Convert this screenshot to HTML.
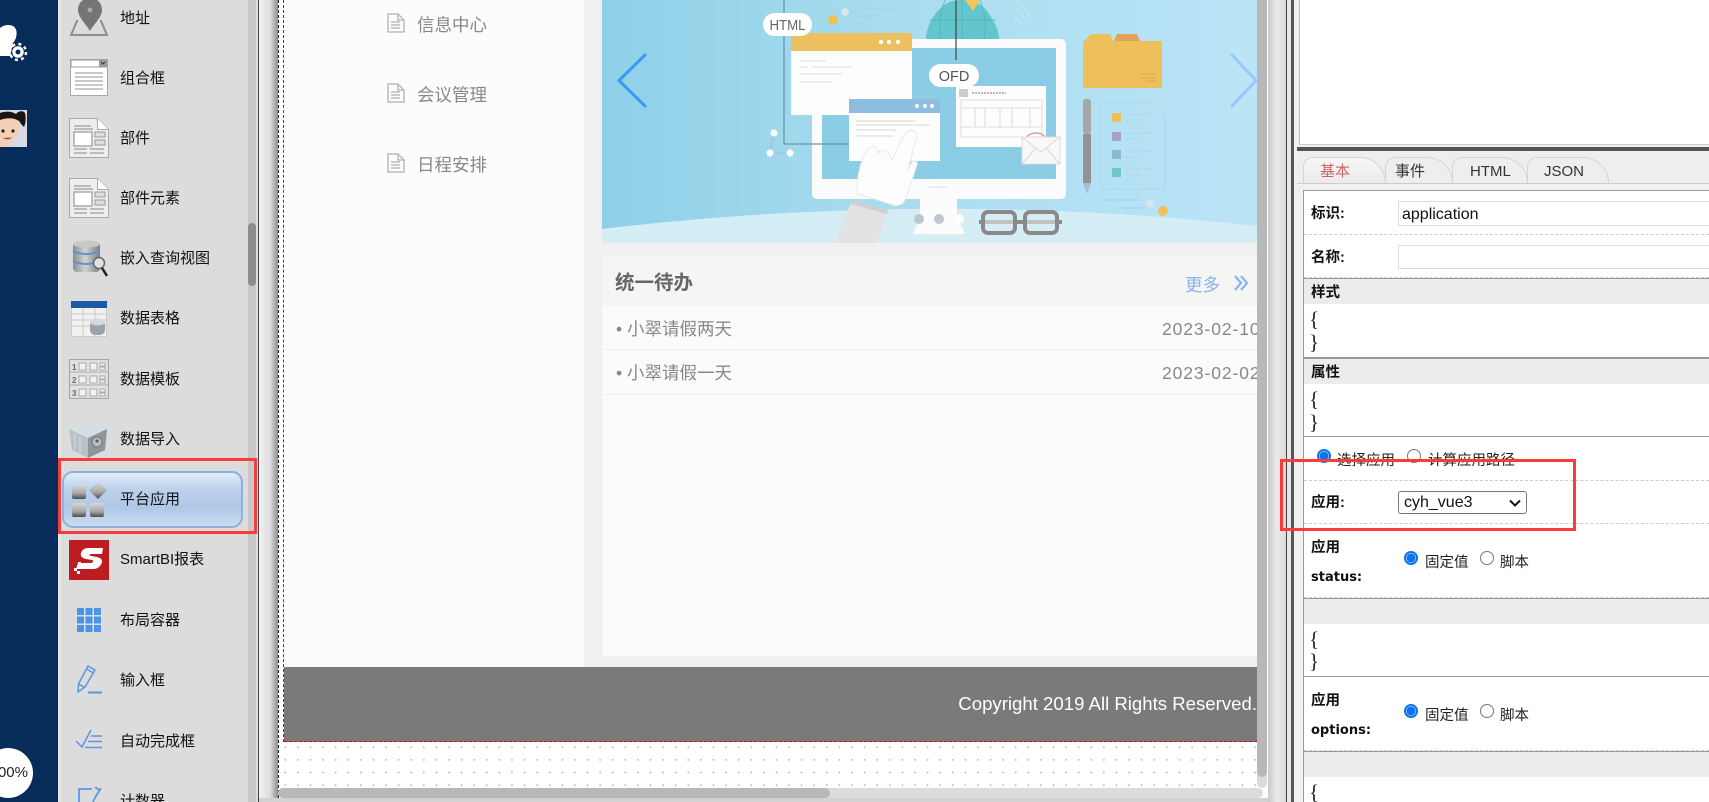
<!DOCTYPE html>
<html lang="zh"><head><meta charset="utf-8"><title>设计器</title>
<style>
html,body{margin:0;padding:0;width:1709px;height:802px;overflow:hidden;background:#eee}
body{position:relative;font-family:"Liberation Sans","Noto Sans CJK SC",sans-serif;color:#111}
.a,.t,.l,.h,.b,.r{position:absolute}
.t{white-space:nowrap;line-height:20px}
.n{left:120px;font-size:15px;color:#111;margin-top:1px}
.m{left:417px;font-size:17.5px;color:#888;margin-top:1px}
.l{left:1311px;font-size:14.5px;font-weight:bold;white-space:nowrap;line-height:20px;color:#111;margin-top:1px}
.h{left:1304px;width:405px;height:25px;background:#ececec}
.b{left:1309px;font-size:21px;line-height:20px;font-family:"Liberation Serif","Noto Sans CJK SC",serif;color:#222;margin-top:-1px}
.line{position:absolute;left:1304px;width:405px;height:0;border-top:1px solid #999}
.dash{position:absolute;left:1304px;width:405px;height:0;border-top:1px dashed #ccc}
.r{width:14px;height:14px;box-sizing:border-box;border-radius:50%;border:1.5px solid #777;background:#fff}
.r.on{border:2px solid #0b74ea;background:radial-gradient(circle,#0b74ea 0,#0b74ea 4.2px,#fff 4.8px)}
.f{font-size:14.5px;color:#222;margin-top:1px}
.tab{position:absolute;top:157px;height:26px;box-sizing:border-box;border:1px solid #d4d4d4;border-bottom:0;border-radius:10px 26px 0 0;background:#eee;font-size:15px;line-height:28px;color:#333}
svg{position:absolute;display:block}
</style></head><body>

<!-- Left navy bar -->
<div class="a" style="left:0;top:0;width:58px;height:802px;background:#082c59"></div>
<svg style="left:0;top:24px" width="30" height="38" viewBox="0 0 30 38"><path d="M0 4C3 1 9 0 13 2c3 2 4 5 3.500 9-.5 4-2 6-3.500 8-1 2 0 3 2 4l-4 9H0z" fill="#fff"/><circle cx="18" cy="28" r="6.500" fill="#fff" stroke="#082c59" stroke-width="1.500"/><circle cx="18" cy="28" r="8" fill="none" stroke="#fff" stroke-width="2.500" stroke-dasharray="3 3.300"/><circle cx="18" cy="28" r="2.500" fill="#082c59"/></svg>
<svg style="left:0;top:110px" width="27" height="37" viewBox="0 0 27 37"><rect width="27" height="37" fill="#d8dbe6"/><path d="M0 9c6-3 13-3 17 0 3 4 3 11 0 17-3 4-5 5-7 6l1 5H0z" fill="#f2cfb6"/><path d="M0 3c5-2 12-2 16 1 2 2 3 5 3 7-6-4-13-3-19-1z" fill="#1c1410"/><path d="M16 4c2-3 7-4 9-1 1 4 1 10-1 14l-3-3c-2-3-4-7-5-10z" fill="#1c1410"/><circle cx="3" cy="21" r="1.600" fill="#222"/><circle cx="13" cy="21" r="1.600" fill="#222"/><path d="M3 28q5 3 9-.5z" fill="#b04040"/></svg>
<div class="a" style="left:-17px;top:748px;width:50px;height:50px;border-radius:50%;background:#fff"></div>
<div class="t" style="left:-9px;top:763px;width:37px;text-align:right;font-size:15px;color:#222;overflow:hidden;direction:rtl"><span dir="ltr">100%</span></div>

<!-- Component panel -->
<div class="a" style="left:58px;top:0;width:200px;height:802px;background:#dcdcdc"></div>
<div class="a" style="left:58px;top:0;width:3px;height:802px;background:#e6e6e6"></div>
<div class="a" style="left:248px;top:0;width:8px;height:802px;background:#c8c8c8"></div>
<div class="a" style="left:248px;top:223px;width:8px;height:63px;border-radius:4px;background:#8c8c8c"></div>
<div class="a" style="left:258px;top:0;width:1px;height:802px;background:#444"></div>

<div class="t n" style="top:8px">地址</div>
<div class="t n" style="top:68px">组合框</div>
<div class="t n" style="top:128px">部件</div>
<div class="t n" style="top:188px">部件元素</div>
<div class="t n" style="top:248px">嵌入查询视图</div>
<div class="t n" style="top:308px">数据表格</div>
<div class="t n" style="top:369px">数据模板</div>
<div class="t n" style="top:429px">数据导入</div>
<div class="a" style="left:62px;top:471px;width:181px;height:57px;box-sizing:border-box;border:2px solid #8fb0d9;border-radius:11px;background:linear-gradient(#e1ecfa 0,#bcd2ec 30%,#aec8e6 65%,#cadcf2 100%)"></div>
<div class="t n" style="top:489px">平台应用</div>
<div class="t n" style="top:549px">SmartBI报表</div>
<div class="t n" style="top:610px">布局容器</div>
<div class="t n" style="top:670px">输入框</div>
<div class="t n" style="top:731px">自动完成框</div>
<div class="t n" style="top:791px">计数器</div>

<!-- icons -->
<svg style="left:69px;top:0" width="40" height="38" viewBox="0 0 40 38"><path d="M21 -2c-7 0-12 5-12 12 0 7 8 14 12 21 4-7 12-14 12-21 0-7-5-12-12-12z" fill="#757575"/><circle cx="21" cy="10" r="2.500" fill="#a8a8a8"/><path d="M9 21h-1L2 35h36l-6-14h-1" fill="none" stroke="#8e8e8e" stroke-width="2"/></svg>
<svg style="left:70px;top:59px" width="38" height="37" viewBox="0 0 38 37"><rect x=".5" y=".5" width="37" height="36" fill="#fff" stroke="#aaa"/><rect x="1" y="1" width="36" height="7" fill="#fff" stroke="#999"/><rect x="29" y="1" width="8" height="7" fill="#999"/><path d="M31 3l2 2 2-2" stroke="#333" fill="none"/><path d="M5 14h28M5 18h28M5 22h28M5 26h28M5 30h28" stroke="#aaa" stroke-width="1.200"/></svg>
<svg style="left:69px;top:118px" width="40" height="40" viewBox="0 0 40 40"><path d="M.5.5h28l11 11v28H.5z" fill="#eee" stroke="#aaa"/><path d="M28.500.5v11h11" fill="#fff" stroke="#aaa"/><path d="M5 8h17M5 11h19" stroke="#aaa" stroke-width="1.500"/><rect x="5" y="14" width="18" height="14" fill="#fff" stroke="#aaa" stroke-width="1.500"/><rect x="26" y="14" width="10" height="5" fill="#ddd" stroke="#999"/><rect x="26" y="22" width="10" height="5" fill="#ddd" stroke="#999"/><path d="M5 31h13M21 31h14M5 35h13M21 35h14" stroke="#aaa" stroke-width="1.500"/></svg>
<svg style="left:69px;top:178px" width="40" height="40" viewBox="0 0 40 40"><path d="M.5.500h28l11 11v28H.5z" fill="#eee" stroke="#aaa"/><path d="M28.500.5v11h11" fill="#fff" stroke="#aaa"/><path d="M5 8h17M5 11h19" stroke="#aaa" stroke-width="1.500"/><rect x="5" y="14" width="18" height="14" fill="#fff" stroke="#aaa" stroke-width="1.500"/><rect x="26" y="14" width="10" height="5" fill="#ddd" stroke="#999"/><rect x="26" y="22" width="10" height="5" fill="#ddd" stroke="#999"/><path d="M5 31h13M21 31h14M5 35h13M21 35h14" stroke="#aaa" stroke-width="1.500"/></svg>
<svg style="left:72px;top:240px" width="36" height="38" viewBox="0 0 36 38"><defs><linearGradient id="db" x1="0" x2="1"><stop offset="0" stop-color="#8d8d8d"/><stop offset=".45" stop-color="#d2d2d2"/><stop offset="1" stop-color="#7e7e7e"/></linearGradient></defs><rect x="1" y="2" width="27" height="30" rx="4" fill="url(#db)"/><ellipse cx="14.500" cy="4" rx="13.500" ry="3.500" fill="#c8c8c8"/><path d="M1 11q13.500 6 27 0M1 21q13.500 6 27 0" stroke="#5f92cf" stroke-width="2" fill="none"/><circle cx="27" cy="23" r="5.500" fill="#dce2e8" stroke="#666" stroke-width="1.500"/><path d="M30 28l5 8" stroke="#222" stroke-width="2.500"/></svg>
<svg style="left:71px;top:301px" width="36" height="36" viewBox="0 0 36 36"><rect x=".5" y=".5" width="35" height="35" fill="#f1f1f1" stroke="#ccc"/><rect width="36" height="7" fill="#1b5aa5"/><path d="M0 13h36M0 19h36M0 25h36M12 7v29M24 7v29" stroke="#ccc"/><rect x="19" y="19" width="15" height="15" rx="5" fill="#9ca3a8"/><ellipse cx="26.500" cy="21" rx="7.500" ry="3.500" fill="#d4d8da"/></svg>
<svg style="left:69px;top:359px" width="40" height="40" viewBox="0 0 40 40"><rect x=".5" y=".5" width="39" height="39" fill="#e2e2e2" stroke="#a5a5a5" stroke-width="1.200"/><path d="M0 13h40M0 26h40" stroke="#aaa"/><g fill="#f2f2f2" stroke="#aaa"><rect x="10" y="4" width="7" height="7"/><rect x="10" y="17" width="7" height="7"/><rect x="10" y="30" width="7" height="7"/><rect x="21" y="4" width="7" height="7"/><rect x="21" y="17" width="7" height="7"/><rect x="21" y="30" width="7" height="7"/><rect x="31" y="4" width="5" height="3"/><rect x="31" y="8" width="5" height="3"/><rect x="31" y="17" width="5" height="3"/><rect x="31" y="21" width="5" height="3"/><rect x="31" y="30" width="5" height="3"/><rect x="31" y="34" width="5" height="3"/></g><g font-size="8" fill="#666" font-family="Liberation Sans" font-weight="bold"><text x="3" y="11">1</text><text x="3" y="24">2</text><text x="3" y="37">3</text></g></svg>
<svg style="left:69px;top:420px" width="39" height="38" viewBox="0 0 39 38"><path d="M0 9l19-9 19 9-19 9z" fill="#d4dee4"/><path d="M0 9l19 9v20L3 30z" fill="#b8c2c9"/><path d="M38 9L19 18v20l17-8z" fill="#8c969c"/><circle cx="28" cy="22" r="5" fill="#bbb" stroke="#777"/><circle cx="28" cy="21" r="1.500" fill="#555"/><path d="M6 14v15M11 16v17" stroke="#d5dde2"/></svg>
<svg style="left:72px;top:481px" width="36" height="37" viewBox="0 0 36 37"><defs><linearGradient id="sq" x1="0" y1="0" x2="0" y2="1"><stop offset="0" stop-color="#d8d8d8"/><stop offset=".6" stop-color="#a6a6a6"/><stop offset="1" stop-color="#4c4c4c"/></linearGradient></defs><rect x="0" y="4" width="14" height="14" rx="2" fill="url(#sq)"/><path d="M26 1l9 8.500-9 8.500-9-8.500z" fill="url(#sq)"/><rect x="0" y="22" width="14" height="14" rx="2" fill="url(#sq)"/><rect x="18" y="22" width="14" height="14" rx="2" fill="url(#sq)"/></svg>
<svg style="left:69px;top:540px" width="40" height="40" viewBox="0 0 40 40"><rect width="40" height="40" fill="#bd1c20"/><path d="M34 8H20c-5 0-7 2-8 5s1 5 5 6l6 1c2 .5 1 3-1 3H9l-2 6h17c5 0 8-3 9-7 .5-3-2-4-5-5l-6-1c-2-.5-2-2 0-2h11z" fill="#fff"/><path d="M9 22h3v3H9zM12 26h3v3h-3zM5 28h3v3H5zM8 31h3v3H8z" fill="#fff"/></svg>
<svg style="left:77px;top:608px" width="24" height="24" viewBox="0 0 24 24" fill="#4c94e8"><rect width="7" height="7"/><rect x="8.500" width="7" height="7"/><rect x="17" width="7" height="7"/><rect y="8.500" width="7" height="7"/><rect x="8.500" y="8.500" width="7" height="7"/><rect x="17" y="8.500" width="7" height="7"/><rect y="17" width="7" height="7"/><rect x="8.500" y="17" width="7" height="7"/><rect x="17" y="17" width="7" height="7"/></svg>
<svg style="left:77px;top:665px" width="26" height="29" viewBox="0 0 26 29" fill="none" stroke="#5b97e2" stroke-width="1.500"><path d="M11 1l7 4-10 17-7 5 .5-8z"/><path d="M9.500 4l7 4M1.500 19l6.500 3.500"/><path d="M11 27.500h14" stroke-width="2"/></svg>
<svg style="left:75px;top:729px" width="28" height="20" viewBox="0 0 28 20" fill="none" stroke="#5b97e2" stroke-width="1.500"><path d="M1 12l6 6L16 1M16 7h11M13 12.500h14M10 18.500h17"/></svg>
<svg style="left:78px;top:787px" width="24" height="15" viewBox="0 0 24 15" fill="none" stroke="#5b97e2" stroke-width="1.800"><path d="M14 2H1v13M15 15l3-6 5-8M17 0l4 3"/></svg>

<!-- Red highlight left -->
<div class="a" style="left:58px;top:458px;width:199px;height:76px;box-sizing:border-box;border:3px solid #f73c3c"></div>

<!-- Canvas area -->
<div class="a" style="left:259px;top:0;width:19px;height:802px;background:linear-gradient(90deg,#f2f2f2,#dcdcdc 60%,#8c8c8c)"></div>
<div class="a" style="left:259px;top:798px;width:1027px;height:4px;background:#d2d2d2"></div>
<div class="a" style="left:278px;top:0;width:990px;height:798px;background:#fff;box-sizing:border-box;border-left:1px dashed #222"></div>
<div class="a" style="left:1268px;top:0;width:18px;height:802px;background:linear-gradient(90deg,#c8c8c8,#ececec 50%,#d8d8d8)"></div>
<div class="a" style="left:1286px;top:0;width:1px;height:802px;background:#444"></div>
<div class="a" style="left:1287px;top:0;width:4px;height:802px;background:#e8e8e8"></div>
<div class="a" style="left:1291px;top:0;width:3px;height:802px;background:#555"></div>
<div class="a" style="left:1294px;top:0;width:3px;height:802px;background:#f0f0f0"></div>

<!-- Dotted grid -->
<div class="a" style="left:279px;top:743px;width:978px;height:45px;background-image:radial-gradient(circle,#b4b4b4 .7px,transparent 1px);background-size:12.600px 12.600px;background-position:0 -2px"></div>

<!-- Page -->
<div class="a" style="left:284px;top:0;width:300px;height:667px;background:#fcfcfc"></div>
<div class="a" style="left:283px;top:0;width:0;height:742px;border-left:1px dashed #e00000"></div>
<div class="a" style="left:584px;top:0;width:673px;height:667px;background:#f0f0f0"></div>
<div class="a" style="left:602px;top:256px;width:655px;height:400px;background:#fbfbfb"></div>

<svg style="left:387px;top:13px" width="18" height="20" viewBox="0 0 18 20" fill="none" stroke="#bbb" stroke-width="1.500"><path d="M1 1h10l6 6v12H1zM11 1v6h6M4 9h9M4 12h9M4 15h9"/></svg>
<svg style="left:387px;top:83px" width="18" height="20" viewBox="0 0 18 20" fill="none" stroke="#bbb" stroke-width="1.500"><path d="M1 1h10l6 6v12H1zM11 1v6h6M4 9h9M4 12h9M4 15h9"/></svg>
<svg style="left:387px;top:153px" width="18" height="20" viewBox="0 0 18 20" fill="none" stroke="#bbb" stroke-width="1.500"><path d="M1 1h10l6 6v12H1zM11 1v6h6M4 9h9M4 12h9M4 15h9"/></svg>
<div class="t m" style="top:14px">信息中心</div>
<div class="t m" style="top:84px">会议管理</div>
<div class="t m" style="top:154px">日程安排</div>

<!-- Banner -->
<svg style="left:602px;top:0" width="655" height="243" viewBox="602 0 655 243">
<defs><linearGradient id="bg" x1="0" x2="1"><stop offset="0" stop-color="#8ed0e8"/><stop offset=".45" stop-color="#a9dcef"/><stop offset="1" stop-color="#bce4f7"/></linearGradient></defs>
<rect x="602" y="0" width="655" height="243" fill="url(#bg)"/>
<path d="M602 229Q930 190 1257 226V243H602z" fill="#d5edf5"/>
<path d="M926 39a37 37 0 0 1 5-18c8-14 16-21 31-21s25 7 31 21c4 6 6 12 6 18z" fill="#63c6cc"/>
<path d="M962 0v39M945 0q-8 20-4 39M980 0q8 20 4 39M930 20h66" stroke="#4fb0b8" fill="none" stroke-width=".7"/>
<path d="M965 0h15l-7 11z" fill="#eec85f"/>
<path d="M1014 1q13 5 17 20M1014 8q8 3 11 13" stroke="#cde4ef" fill="none"/><circle cx="1017" cy="22" r="2.500" fill="none" stroke="#cde4ef"/>
<path d="M857 9h38M857 16h21" stroke="#a6d2e2"/>
<circle cx="833" cy="20" r="5" fill="#edc158"/><circle cx="845" cy="12" r="4" fill="#dbe4e8"/>
<rect x="812" y="39" width="254" height="160" rx="5" fill="#fcfcfc"/>
<rect x="822" y="48" width="234" height="131" fill="#8acde4"/>
<path d="M929 187h18" stroke="#ddd"/>
<path d="M920 199h37v18l8 17h-52l7-17z" fill="#fcfcfc"/>
<path d="M784 0v144h66" stroke="#6a96a8" fill="none" stroke-width="1.300"/>
<path d="M956 0v60" stroke="#444" stroke-width="1.200"/>
<rect x="791" y="33" width="121" height="82" fill="#fdfdfd"/>
<rect x="791" y="33" width="121" height="18" fill="#ecc05e"/>
<g fill="#fff"><circle cx="881" cy="42" r="2.200"/><circle cx="889" cy="42" r="2.200"/><circle cx="898" cy="42" r="2.200"/></g>
<path d="M800 61h26M800 67h8M812 67h40M800 74h42M800 82h32" stroke="#e4e4e4" stroke-width="1.200"/>
<rect x="849" y="99" width="91" height="62" fill="#fdfdfd"/>
<rect x="849" y="99" width="91" height="14" fill="#8fbde0"/>
<g fill="#fff"><circle cx="917" cy="106" r="2"/><circle cx="925" cy="106" r="2"/><circle cx="932" cy="106" r="2"/></g>
<path d="M856 121h60M856 125h74M856 130h40M856 136h38" stroke="#dedede" stroke-width="1.200"/>
<rect x="956" y="86" width="90" height="61" fill="#fdfdfd"/>
<path d="M961 100h81v37h-81zM961 108h81M961 127h81M975 108v19M985 108v19M1000 108v19M1012 108v19M1030 108v19" stroke="#d4d4d4" fill="none" stroke-width=".8"/>
<rect x="959" y="89" width="9" height="8" fill="#ccc"/><path d="M972 93h34" stroke="#777" stroke-dasharray="2 1"/>
<ellipse cx="1036" cy="138" rx="9" ry="5" fill="none" stroke="#e07070"/>
<rect x="1022" y="137" width="38" height="27" fill="#f8f8f8" stroke="#ddd"/><path d="M1022 137l19 15 19-15M1022 164l14-16M1060 164l-14-16" stroke="#d8d8d8" fill="none"/>
<rect x="763" y="13" width="49" height="23" rx="11.500" fill="#fff"/>
<text x="787.500" y="30" text-anchor="middle" font-size="14.500" fill="#666" font-family="Liberation Sans" textLength="36" lengthAdjust="spacingAndGlyphs">HTML</text>
<rect x="929" y="64" width="50" height="23" rx="11.500" fill="#fff"/>
<text x="954" y="81" text-anchor="middle" font-size="14.500" fill="#555" font-family="Liberation Sans">OFD</text>
<path d="M774 133l-4 20h20" stroke="#9cc4d4" fill="none"/><circle cx="774" cy="133" r="3.500" fill="#fff"/><circle cx="770" cy="153" r="3.500" fill="#fff"/><circle cx="790" cy="153" r="3.500" fill="#fff"/>
<path d="M857 186C858 170 864 148 872 147C876 146 878 150 878 153C881 149 887 149 889 155L892 160L903 137C906 129 916 128 917 135L908 170L912 162C915 160 918 161 917 165L906 198C903 206 896 207 890 204L858 194Z" fill="#fdfdfd" stroke="#e8e8e8"/>
<path d="M852 200l36 10-11 33h-42z" fill="#e2e2e2"/><path d="M852 200l36 10-1 4-36-10z" fill="#cfcfcf"/>
<path d="M1083 88V42l8-8h19l3 7h49v47z" fill="#eec05c"/><path d="M1114 41l3-7h20l3 7z" fill="#e4a258"/>
<path d="M1140 74h16M1142 78h14M1146 81h10" stroke="#d8aa50"/>
<rect x="1083" y="99" width="8" height="35" rx="3" fill="#a6a6a6"/><rect x="1083" y="134" width="8" height="49" fill="#939393"/><path d="M1083 183h8l-4 11z" fill="#a8c0cc"/>
<path d="M1101 102h54M1165 113v76h-64v-87" stroke="#b0d6e6" fill="none"/><path d="M1150 102l6 5 13-13" stroke="#c8dfe9" fill="none"/>
<rect x="1112" y="113" width="9" height="9" fill="#edc158"/><rect x="1112" y="132" width="9" height="9" fill="#a89fcf"/><rect x="1112" y="150" width="9" height="9" fill="#88bccd"/><rect x="1112" y="168" width="9" height="9" fill="#70c6c0"/>
<path d="M1125 114h30M1125 120h18M1125 133h30M1125 139h18M1125 151h30M1125 157h18M1125 169h30M1125 175h18" stroke="#b0d8e6"/>
<path d="M1101 200h38M1118 208h26" stroke="#a6cfe0"/><circle cx="1150" cy="203" r="4" fill="#dbe4e8"/><circle cx="1163" cy="211" r="5" fill="#edc158"/>
<path d="M985 222h28M1027 222h28" stroke="#c2c2c2" stroke-width="4"/>
<g fill="none" stroke="#8a8a8a" stroke-width="4"><rect x="983" y="212" width="32" height="21" rx="5"/><rect x="1025" y="212" width="32" height="21" rx="5"/><path d="M979 222h4M1015 222h10M1057 222h5"/></g>
<circle cx="919" cy="219" r="5" fill="#bcc8cd"/><circle cx="939" cy="219" r="5" fill="#bcc8cd"/><circle cx="959" cy="219" r="5" fill="#fff"/>
<path d="M645 55L619 80.500 645 106" fill="none" stroke="#3e96f5" stroke-width="3" stroke-linecap="round" stroke-linejoin="round"/>
<path d="M1232 55L1256 80.500 1232 106" fill="none" stroke="#93c9fb" stroke-width="3" stroke-linecap="round" stroke-linejoin="round"/>
</svg>

<!-- Todo -->
<div class="a" style="left:602px;top:256px;width:655px;height:50px;background:#f5f5f5"></div>
<div class="t" style="left:615px;top:272px;font-size:19.500px;line-height:22px;font-weight:bold;color:#666">统一待办</div>
<div class="t" style="left:1185px;top:274px;font-size:17.500px;line-height:22px;color:#8ab4ec">更多</div>
<svg style="left:1234px;top:275px" width="14" height="16" viewBox="0 0 14 16" fill="none" stroke="#8ab4ec" stroke-width="2.200"><path d="M1 1l6 7-6 7M7 1l6 7-6 7"/></svg>
<div class="a" style="left:602px;top:349px;width:655px;height:1px;background:#efeff2"></div>
<div class="a" style="left:602px;top:394px;width:655px;height:1px;background:#efeff2"></div>
<div class="t" style="left:616px;top:318px;font-size:17.500px;line-height:22px;color:#888">• 小翠请假两天</div>
<div class="t" style="left:616px;top:362px;font-size:17.500px;line-height:22px;color:#888">• 小翠请假一天</div>
<div class="a" style="left:1162px;top:318px;width:95px;height:22px;overflow:hidden"><div class="t" style="left:0;top:0;font-size:17.500px;line-height:22px;color:#888;letter-spacing:.9px">2023-02-10</div></div>
<div class="a" style="left:1162px;top:362px;width:95px;height:22px;overflow:hidden"><div class="t" style="left:0;top:0;font-size:17.500px;line-height:22px;color:#888;letter-spacing:.9px">2023-02-02</div></div>

<!-- Footer -->
<div class="a" style="left:284px;top:667px;width:973px;height:75px;background:#7a7a7a;border-bottom:1px dashed #e00000;box-sizing:border-box"></div>
<div class="a" style="left:900px;top:693px;width:357px;height:24px;overflow:hidden"><div class="t" style="right:0;top:0;font-size:18.600px;line-height:22px;color:#fff">Copyright 2019 All Rights Reserved.</div></div>

<!-- Canvas scrollbars -->
<div class="a" style="left:1257px;top:0;width:10px;height:788px;background:#dcdcdc;border-radius:0 0 5px 5px"></div>
<div class="a" style="left:1257px;top:0;width:10px;height:777px;background:#b8b8b8;border-radius:0 0 5px 5px"></div>
<div class="a" style="left:278px;top:788px;width:985px;height:10px;background:#dcdcdc;border-radius:5px"></div>
<div class="a" style="left:278px;top:788px;width:552px;height:10px;background:#b8b8b8;border-radius:5px"></div>

<!-- Right panel -->
<div class="a" style="left:1297px;top:0;width:412px;height:802px;background:#f0f0f0"></div>
<div class="a" style="left:1299px;top:0;width:410px;height:145px;box-sizing:border-box;background:#fff;border-left:1px solid #bbb;border-bottom:1px solid #ccc"></div>
<div class="a" style="left:1297px;top:147px;width:412px;height:4px;background:#555"></div>
<div class="a" style="left:1297px;top:151px;width:412px;height:33px;background:#eee;border-bottom:1px solid #ccc;box-sizing:border-box"></div>
<div class="tab" style="left:1527px;width:82px;padding-left:16px">JSON</div>
<div class="tab" style="left:1452px;width:76px;padding-left:17px">HTML</div>
<div class="tab" style="left:1385px;width:68px;padding-left:9px">事件</div>
<div class="tab" style="left:1303px;width:83px;padding-left:16px;color:#c66;background:linear-gradient(#f6f6f6,#ececec)">基本</div>

<div class="a" style="left:1303px;top:190px;width:406px;height:612px;box-sizing:border-box;background:#fff;border-left:1px solid #999;border-top:1px solid #999"></div>

<div class="l" style="top:203px">标识:</div>
<div class="a" style="left:1398px;top:201px;width:311px;height:25px;box-sizing:border-box;border:1px solid #ddd;border-right:0;font-size:16px;line-height:25px;padding-left:3px;color:#111">application</div>
<div class="dash" style="top:234px"></div>
<div class="l" style="top:247px">名称:</div>
<div class="a" style="left:1398px;top:245px;width:311px;height:24px;box-sizing:border-box;border:1px solid #ddd;border-right:0"></div>
<div class="dash" style="top:277px"></div>

<div class="h" style="top:279px"></div>
<div class="line" style="top:278px"></div>
<div class="l" style="top:282px">样式</div>
<div class="b" style="top:310px">{</div>
<div class="b" style="top:333px">}</div>
<div class="line" style="top:357px;border-top-width:2px"></div>

<div class="h" style="top:359px"></div>
<div class="l" style="top:362px">属性</div>
<div class="b" style="top:390px">{</div>
<div class="b" style="top:413px">}</div>
<div class="line" style="top:436px"></div>

<div class="r on" style="left:1317px;top:449px"></div>
<div class="t f" style="left:1337px;top:450px">选择应用</div>
<div class="r" style="left:1407px;top:449px"></div>
<div class="t f" style="left:1428px;top:450px">计算应用路径</div>
<div class="dash" style="top:480px"></div>

<div class="l" style="top:492px">应用:</div>
<div class="a" style="left:1398px;top:491px;width:129px;height:23px;box-sizing:border-box;border:1px solid #767676;border-radius:3px;background:#fff;font-size:16px;line-height:22px;padding-left:5px;color:#111">cyh_vue3</div>
<svg style="left:1509px;top:499px" width="12" height="8" viewBox="0 0 12 8" fill="none" stroke="#111" stroke-width="2"><path d="M1 1.500l5 5 5-5"/></svg>
<div class="dash" style="top:523px"></div>

<div class="l" style="top:537px">应用</div>
<div class="l" style="top:567px;font-family:'DejaVu Sans','Liberation Sans',sans-serif;font-size:13px">status:</div>
<div class="r on" style="left:1404px;top:551px"></div>
<div class="t f" style="left:1425px;top:552px">固定值</div>
<div class="r" style="left:1480px;top:551px"></div>
<div class="t f" style="left:1500px;top:552px">脚本</div>
<div class="dash" style="top:597px"></div>
<div class="line" style="top:598px"></div>

<div class="h" style="top:599px"></div>
<div class="b" style="top:630px">{</div>
<div class="b" style="top:652px">}</div>
<div class="line" style="top:676px"></div>

<div class="l" style="top:690px">应用</div>
<div class="l" style="top:720px;font-family:'DejaVu Sans','Liberation Sans',sans-serif;font-size:13px">options:</div>
<div class="r on" style="left:1404px;top:704px"></div>
<div class="t f" style="left:1425px;top:705px">固定值</div>
<div class="r" style="left:1480px;top:704px"></div>
<div class="t f" style="left:1500px;top:705px">脚本</div>
<div class="dash" style="top:750px"></div>
<div class="line" style="top:751px"></div>

<div class="h" style="top:752px"></div>
<div class="b" style="top:783px">{</div>

<!-- Red highlight right -->
<div class="a" style="left:1280px;top:459px;width:296px;height:72px;box-sizing:border-box;border:3px solid #f73c3c"></div>

</body></html>
